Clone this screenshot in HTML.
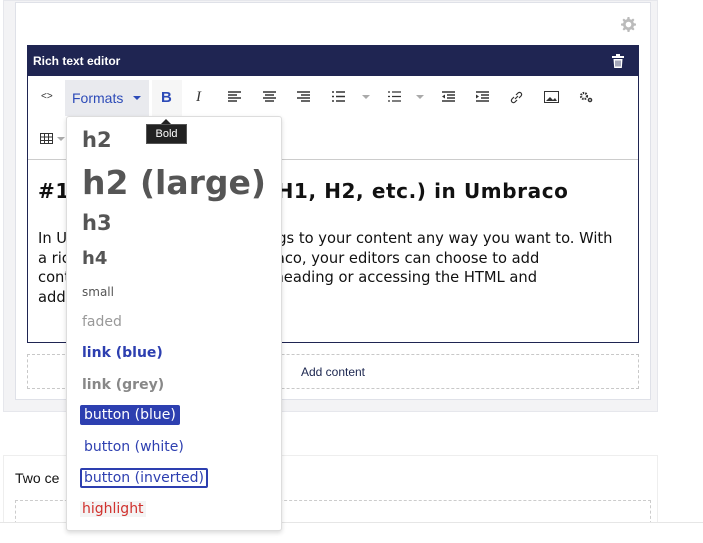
<!DOCTYPE html>
<html><head><style>
*{box-sizing:border-box;margin:0;padding:0}
body{width:703px;height:543px;background:#fff;position:relative;overflow:hidden;font-family:"Liberation Sans",sans-serif}
.abs{position:absolute}
.dd div{position:absolute;left:15px;white-space:nowrap;font-family:"DejaVu Sans",sans-serif;line-height:1}
.sv{position:absolute;top:91px}
.car{position:absolute;top:95px;width:0;height:0;border-left:4px solid transparent;border-right:4px solid transparent;border-top:4px solid #aaa}
</style></head><body>
<div class="abs" style="left:3px;top:0;width:655px;height:412px;background:#f3f3f5;border:1px solid #e6e7ec"></div>
<div class="abs" style="left:15px;top:2px;width:636px;height:398px;background:#fff;border:1px solid #dfe1e8"></div>
<svg class="abs" style="left:621px;top:17px" width="15" height="15" viewBox="0 0 16 16"><path fill="#bbb" d="M8 5a3 3 0 1 0 0 6 3 3 0 0 0 0-6zM7 0h2l.4 2.2 1.6.7 1.9-1.3 1.4 1.4-1.3 1.9.7 1.6L16 7v2l-2.2.4-.7 1.6 1.3 1.9-1.4 1.4-1.9-1.3-1.6.7L9 16H7l-.4-2.2-1.6-.7-1.9 1.3-1.4-1.4 1.3-1.9-.7-1.6L0 9V7l2.2-.4.7-1.6-1.3-1.9 1.4-1.4 1.9 1.3 1.6-.7z"/></svg>
<div class="abs" style="left:27px;top:45px;width:612px;height:298px;border:1px solid #1f2552;background:#fff"></div>
<div class="abs" style="left:27px;top:45px;width:612px;height:31px;background:#1f2552;color:#fff;font-weight:bold;font-size:12px;padding:9px 6px">Rich text editor</div>
<svg class="abs" style="left:612px;top:54px" width="12" height="14" viewBox="0 0 12 14"><rect x="0" y="2" width="12" height="2" fill="#fff"/><rect x="4" y="0" width="4" height="2" fill="#fff"/><path d="M1.5 5h9l-.7 9H2.2z" fill="#fff"/><path d="M4 6.5v6M6 6.5v6M8 6.5v6" stroke="#1f2552" stroke-width=".8"/></svg>
<div class="abs" style="left:28px;top:159px;width:610px;height:1px;background:#ccc"></div>
<div class="abs" style="left:65px;top:80px;width:84px;height:36px;background:#e9eaee"></div>
<div class="abs" style="left:152px;top:80px;width:30px;height:36px;background:#f6f6f6"></div>
<div class="abs" style="left:41px;top:91px;font-size:10px;color:#333">&lt;&gt;</div>
<div class="abs" style="left:72px;top:90px;color:#2d4bb8;font-size:14px">Formats</div>
<div class="abs" style="left:133px;top:96px;width:0;height:0;border-left:4px solid transparent;border-right:4px solid transparent;border-top:4px solid #2d4bb8"></div>
<div class="abs" style="left:161px;top:89px;color:#2d4bb8;font-size:15px;font-weight:bold">B</div>
<div class="abs" style="left:196px;top:89px;color:#333;font-size:15px;font-style:italic;font-family:'Liberation Serif',serif">I</div>
<svg class="sv" style="left:228px" width="14" height="12"><path d="M0 1h13M0 4h9M0 7h13M0 10h9" stroke="#333" stroke-width="1.5"/></svg>
<svg class="sv" style="left:263px" width="14" height="12"><path d="M0 1h13M2 4h9M0 7h13M2 10h9" stroke="#333" stroke-width="1.5"/></svg>
<svg class="sv" style="left:297px" width="14" height="12"><path d="M0 1h13M4 4h9M0 7h13M4 10h9" stroke="#333" stroke-width="1.5"/></svg>
<svg class="sv" style="left:332px" width="14" height="12"><path d="M0 1h2M0 5.5h2M0 10h2M4 1h9M4 5.5h9M4 10h9" stroke="#333" stroke-width="1.6"/></svg>
<div class="car" style="left:362px"></div>
<svg class="sv" style="left:388px" width="14" height="12"><path d="M0 1h2M0 5.5h2M0 10h2M4 1h9M4 5.5h9M4 10h9" stroke="#333" stroke-width="1.2"/></svg>
<div class="car" style="left:416px"></div>
<svg class="sv" style="left:442px" width="14" height="12"><path d="M0 1h13M5 4h8M5 7h8M0 10h13" stroke="#333" stroke-width="1.5"/><path d="M0 5.5l3-2v4z" fill="#333"/></svg>
<svg class="sv" style="left:476px" width="14" height="12"><path d="M0 1h13M5 4h8M5 7h8M0 10h13" stroke="#333" stroke-width="1.5"/><path d="M3 5.5l-3-2v4z" fill="#333"/></svg>
<svg class="sv" style="left:510px" width="14" height="13"><path d="M6 4l2-2a2 2 0 0 1 3 3l-2 2M7 9l-2 2a2 2 0 0 1-3-3l2-2M5 8l3-3" stroke="#333" stroke-width="1.2" fill="none"/></svg>
<svg class="sv" style="left:544px" width="15" height="12"><rect x=".5" y=".5" width="14" height="11" fill="none" stroke="#333"/><path d="M2 10l4-4 3 3 2-2 2 3z" fill="#333"/></svg>
<svg class="sv" style="left:579px" width="14" height="12"><circle cx="5" cy="5" r="3" fill="none" stroke="#333" stroke-width="2.2" stroke-dasharray="1.5 1"/><circle cx="11" cy="9" r="1.6" fill="none" stroke="#333" stroke-width="1.4"/></svg>
<svg class="abs" style="left:40px;top:133px" width="13" height="11"><rect x=".5" y=".5" width="12" height="10" fill="none" stroke="#333"/><path d="M0 4h13M0 7.5h13M4.5 0v11M8.5 0v11" stroke="#333"/></svg>
<div class="car" style="left:57px;top:137px"></div>
<div class="abs" style="left:38px;top:179px;font-family:'DejaVu Sans',sans-serif;font-size:20px;letter-spacing:0.6px;font-weight:bold;color:#111;white-space:nowrap">#1 Using headings (H1, H2, etc.) in Umbraco</div>
<div class="abs" style="left:38px;top:229px;font-family:'DejaVu Sans',sans-serif;font-size:14.7px;line-height:19.5px;color:#111;white-space:nowrap">In Umbraco, you can add headings to your content any way you want to. With<br>a rich text editor built into Umbraco, your editors can choose to add<br>content by selecting the proper heading or accessing the HTML and<br>adding it.</div>
<div class="abs" style="left:27px;top:354px;width:612px;height:35px;border:1px dashed #c8c8c8;text-align:center;font-size:12px;color:#1b264f;padding-top:10px">Add content</div>
<div class="abs" style="left:3px;top:455px;width:655px;height:80px;background:#fff;border:1px solid #eee"></div>
<div class="abs" style="left:15px;top:470px;font-size:14px;color:#111">Two ce</div>
<div class="abs" style="left:15px;top:500px;width:636px;height:40px;border:1px dashed #ccc"></div>
<div class="abs" style="left:0;top:522px;width:703px;height:21px;background:#fff;border-top:1px solid #e6e6e6"></div>
<div class="abs dd" style="left:66px;top:116px;width:216px;height:415px;background:#fff;border:1px solid #ddd;border-radius:3px;box-shadow:0 2px 5px rgba(0,0,0,.15)">
<div style="top:13px;font-size:21px;font-weight:bold;color:#555">h2</div>
<div style="top:49px;font-size:33px;font-weight:bold;color:#555">h2 (large)</div>
<div style="top:96px;font-size:21px;font-weight:bold;color:#555">h3</div>
<div style="top:133px;font-size:18px;font-weight:bold;color:#555">h4</div>
<div style="top:169px;font-size:12px;color:#555">small</div>
<div style="top:198px;font-size:14px;color:#999">faded</div>
<div style="top:229px;font-size:14px;font-weight:bold;color:#2d3fb0">link (blue)</div>
<div style="top:261px;font-size:14px;font-weight:bold;color:#888">link (grey)</div>
<div style="top:288px;left:13px;font-size:14px;color:#fff;background:#2d3fb0;padding:3px 4px;border-radius:2px">button (blue)</div>
<div style="top:323px;left:17px;font-size:14px;color:#2d3fb0">button (white)</div>
<div style="top:351px;left:13px;font-size:14px;color:#2d3fb0;border:2px solid #2d3fb0;padding:1px 2px;border-radius:2px">button (inverted)</div>
<div style="top:384px;left:13px;font-size:14px;color:#d0312d;background:#f4f4f4;padding:1px 2px">highlight</div>
</div>
<div class="abs" style="left:146px;top:124px;width:41px;height:20px;background:#222;border:1px solid #555;color:#fff;font-size:11px;text-align:center;padding-top:3px">Bold</div>
<div class="abs" style="left:161px;top:119px;width:0;height:0;border-left:5px solid transparent;border-right:5px solid transparent;border-bottom:5px solid #222"></div>
</body></html>
